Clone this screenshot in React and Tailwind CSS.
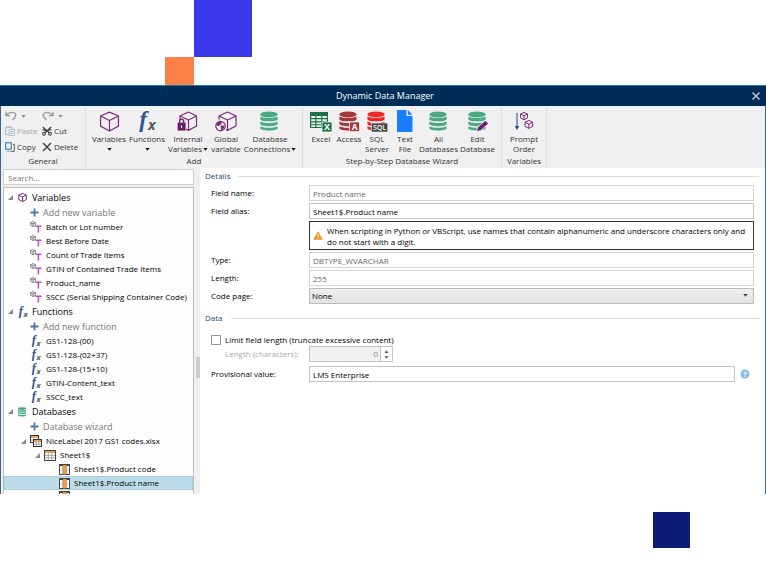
import { useState } from 'react';

/* ---------- Icons ---------- */

const CubeIcon = ({ className, strokeWidth = 1.4 }) => (
  <svg viewBox="0 0 20 20" className={className} fill="none" stroke="currentColor" strokeWidth={strokeWidth} strokeLinejoin="round">
    <path d="M10 1 L18.5 4.8 V14.4 L10 19 L1.5 14.4 V4.8 Z" />
    <path d="M1.5 4.8 L10 9 L18.5 4.8 M10 9 V19" />
  </svg>
);

const LockedCubeIcon = () => (
  <svg viewBox="0 0 22 21" className="h-[21px] w-[22px]" fill="none" stroke="#7b2d7b" strokeWidth="1.2" strokeLinejoin="round">
    <path d="M3 9 V5 L11.5 1 L19.5 5 V15 L11.5 19.4 L9 18.2" />
    <path d="M3 5 L11.5 9 L19.5 5 M11.5 9 V19" />
    <rect x="0.6" y="11.6" width="8" height="8" fill="#6d1f6d" stroke="none" />
    <path d="M2.6 12 V10.2 a2 2 0 0 1 4 0 V12" strokeWidth="1.5" />
    <path d="M4.6 14.4 V17" stroke="#fff" strokeWidth="1" />
  </svg>
);

const GlobalCubeIcon = () => (
  <svg viewBox="0 0 22 21" className="h-[21px] w-[22px]" fill="none" stroke="#7b2d7b" strokeWidth="1.2" strokeLinejoin="round">
    <path d="M4 8.5 V5 L12.5 1 L21 5 V15 L12.5 19.4 L11 18.6" />
    <path d="M4 5 L12.5 9 L21 5 M12.5 9 V19" />
    <circle cx="5.5" cy="15" r="4.7" fill="#f0f0f0" />
    <path d="M1.6 12.8 C3 10.6 5.8 10.4 6.8 11.6 C7.4 13 5.4 13 5 14.2 C4.6 15.4 3 15 1.6 14.6 Z" fill="#7b2d7b" stroke="none" />
    <path d="M5.8 15 C7.2 14.2 9.2 14.8 9.6 15.6 C9 17.6 7.6 19 6 19.2 C6.6 17.4 5 16.4 5.8 15 Z" fill="#7b2d7b" stroke="none" />
  </svg>
);

const DatabaseIcon = ({ className, children }) => (
  <svg viewBox="0 0 22 21" className={className} fill="currentColor">
    <ellipse cx="10" cy="3.4" rx="8.6" ry="3" />
    <path d="M1.4 5.2 C3 7.6 17 7.6 18.6 5.2 V8.4 C17 11 3 11 1.4 8.4 Z" />
    <path d="M1.4 10.2 C3 12.6 17 12.6 18.6 10.2 V13.2 C17 15.8 3 15.8 1.4 13.2 Z" />
    <path d="M1.4 15 C3 17.4 17 17.4 18.6 15 V17.6 C17 20.4 3 20.4 1.4 17.6 Z" />
    {children}
  </svg>
);

const ExcelIcon = () => (
  <svg viewBox="0 0 22 21" className="h-[21px] w-[22px]">
    <path d="M0 1 H18 V17 H0 Z" fill="#1e7145" />
    <path
      d="M1.2 5 H5.2 V7 H1.2 Z M6.4 5 H11.2 V7 H6.4 Z M12.4 5 H16.8 V7 H12.4 Z M1.2 8.2 H5.2 V10.2 H1.2 Z M6.4 8.2 H11.2 V10.2 H6.4 Z M12.4 8.2 H16.8 V10.2 H12.4 Z M1.2 11.4 H5.2 V13.2 H1.2 Z M6.4 11.4 H11.2 V13.2 H6.4 Z M1.2 14.2 H5.2 V16 H1.2 Z M6.4 14.2 H11.2 V16 H6.4 Z"
      fill="#f0f0f0"
    />
    <rect x="12" y="11" width="10" height="10" fill="#1e7145" stroke="#f0f0f0" strokeWidth="0.8" />
    <text x="17" y="19.2" textAnchor="middle" fontSize="9" fontWeight="700" fill="#fff">X</text>
  </svg>
);

const TextFileIcon = () => (
  <svg viewBox="0 0 16 22" className="h-[22px] w-4">
    <path d="M0 0 H9.5 V6 H15.5 V22 H0 Z" fill="#1a7dff" />
    <path d="M10.8 0 L15.5 4.8 H10.8 Z" fill="#1a7dff" />
  </svg>
);

const PromptIcon = () => (
  <svg viewBox="0 0 20 20" className="h-5 w-5" fill="none" strokeLinejoin="round">
    <path d="M3 2 V17" stroke="#2a5a94" strokeWidth="1.1" />
    <path d="M0.8 15 H5.2 L3 19 Z" fill="#1f4e8c" />
    <g stroke="#7b2d7b" strokeWidth="1">
      <path d="M10 1.4 L13.4 3 V7 L10 8.8 L6.6 7 V3 Z M6.6 3 L10 4.8 L13.4 3 M10 4.8 V8.8" />
      <path d="M14.8 9.4 L18.6 11.2 V15.4 L14.8 17.4 L11 15.4 V11.2 Z M11 11.2 L14.8 13.2 L18.6 11.2 M14.8 13.2 V17.4" />
    </g>
  </svg>
);

const FxIcon = ({ large }) => (
  <svg viewBox="0 0 20 20" className={large ? 'h-[22px] w-[22px] overflow-visible' : 'h-3 w-3 overflow-visible'} fontStyle="italic" fontWeight="700">
    <text x="3" y="15" fontSize="21" fontFamily="Liberation Serif, serif" fill="#2f5496">f</text>
    <text x="11" y="18" fontSize="13" fill="#555">x</text>
  </svg>
);

const VariableIcon = () => (
  <svg viewBox="0 0 12 12" className="h-3 w-3" fill="none">
    <path d="M3 0.6 L5.4 1.7 V4.3 L3 5.5 L0.6 4.3 V1.7 Z M0.6 1.7 L3 2.8 L5.4 1.7 M3 2.8 V5.5" stroke="#666" strokeWidth="0.8" />
    <path d="M5.4 5.2 H11.4 M8.4 5 V11.4" stroke="#b94fc0" strokeWidth="1.5" />
  </svg>
);

const PlusIcon = () => (
  <svg viewBox="0 0 10 10" className="h-[9px] w-[9px]">
    <path d="M5 0.5 V9.5 M0.5 5 H9.5" stroke="#4a7aa8" strokeWidth="2" />
  </svg>
);

const TableIcon = () => (
  <svg viewBox="0 0 12 11" className="h-[11px] w-3">
    <rect x="0.5" y="0.5" width="11" height="10" fill="#fff" stroke="#444" />
    <rect x="0" y="0" width="12" height="1.4" fill="#444" />
    <rect x="1" y="1.4" width="10" height="1.6" fill="#f0a030" />
    <path d="M4.2 3 V10 M7.8 3 V10 M1 5.4 H11 M1 7.8 H11" stroke="#8a8a8a" strokeWidth="0.7" />
  </svg>
);

const TablesIcon = () => (
  <svg viewBox="0 0 12 12" className="h-3 w-3">
    <rect x="0.5" y="0.5" width="8" height="7" fill="#fff" stroke="#333" />
    <rect x="0" y="0" width="9" height="1.4" fill="#333" />
    <rect x="1" y="1.4" width="7" height="1.4" fill="#f0a030" />
    <path d="M3.5 3 V7 M1 5 H8" stroke="#777" strokeWidth="0.6" />
    <rect x="3.5" y="4.5" width="8" height="7" fill="#fff" stroke="#333" />
    <rect x="3" y="4" width="9" height="1.4" fill="#333" />
    <rect x="4" y="5.4" width="7" height="1.6" fill="#f0a030" />
    <path d="M6.2 7 V11 M8.8 7 V11 M4 9 H11" stroke="#777" strokeWidth="0.6" />
  </svg>
);

const ColumnIcon = () => (
  <svg viewBox="0 0 11 11" className="h-[11px] w-[11px]">
    <rect x="0.5" y="0.5" width="10" height="10" fill="#fff" stroke="#444" />
    <rect x="0" y="0" width="11" height="2" fill="#444" />
    <rect x="4" y="1" width="3.4" height="9.4" fill="#f0a030" />
    <path d="M3.6 2 V10 M7.6 2 V10" stroke="#777" strokeWidth="0.6" />
    <path d="M1 6 H10" stroke="#aaa" strokeWidth="0.5" />
  </svg>
);

const Caret = ({ className }) => (
  <svg viewBox="0 0 5 3" className={`h-[3px] w-[5px] ${className || ''}`} fill="currentColor">
    <path d="M0.4 0 H4.6 L2.5 2.8 Z" />
  </svg>
);

const UndoIcon = ({ flip }) => (
  <svg viewBox="0 0 12 10" className={flip ? 'h-[10px] w-3 -scale-x-100' : 'h-[10px] w-3'} fill="none" stroke="#9a9a9a" strokeWidth="1.4">
    <path d="M1 0.8 V4.6 H5" />
    <path d="M1.4 4.2 C4 0.8 9.6 0.4 10.6 3.4 C11.2 5.6 9.4 7.4 7.4 9" />
  </svg>
);

const PasteIcon = () => (
  <svg viewBox="0 0 10 10" className="h-[10px] w-[10px]" fill="none" strokeWidth="0.9">
    <path d="M3.6 8.6 H0.6 V1.4 H7.4 V3 M2.4 1.4 V0.5 H5.4 V1.4" stroke="#b5b5b5" />
    <path d="M4 3.6 H9.4 V9.5 H4 Z M5.4 5.6 H8 M5.4 7.4 H8" stroke="#9dbbd2" />
  </svg>
);

const CopyIcon = () => (
  <svg viewBox="0 0 10 10" className="h-[10px] w-[10px]" fill="none">
    <path d="M5.5 9.4 H9.3 V2.4 H7.8" stroke="#555" strokeWidth="0.9" />
    <path d="M0.7 0.7 H6.3 V7.3 H0.7 Z" stroke="#2f78b0" strokeWidth="1.1" />
    <path d="M2.4 9.2 H4.4" stroke="#2f78b0" strokeWidth="0.9" />
  </svg>
);

const CutIcon = () => (
  <svg viewBox="0 0 10 10" className="h-[10px] w-[10px]" fill="none" stroke="#444">
    <path d="M0.8 1 L7.4 7 M9.2 1 L2.6 7 M0.6 3.6 L4 4.4 M9.4 3.6 L6 4.4" strokeWidth="1.3" />
    <circle cx="2" cy="7.8" r="1.4" strokeWidth="1.1" />
    <circle cx="8" cy="7.8" r="1.4" strokeWidth="1.1" />
  </svg>
);

const DeleteIcon = () => (
  <svg viewBox="0 0 10 10" className="h-[10px] w-[10px]" stroke="#444" strokeWidth="1.5">
    <path d="M1 1 L9 9 M9 1 L1 9" />
  </svg>
);

/* ---------- Ribbon ---------- */

const RibbonButton = ({ icon, lines, caret, width }) => (
  <button type="button" className={`flex flex-col items-center ${width}`}>
    <span className="flex h-[26px] items-center justify-center">{icon}</span>
    {lines.map((line, i) => (
      <span key={line} className="flex h-[10px] items-center gap-px whitespace-nowrap leading-[10px]">
        {line}
        {caret && i === 1 && <Caret className="text-black" />}
      </span>
    ))}
    {caret && lines.length === 1 && (
      <span className="flex h-[10px] items-center">
        <Caret className="text-black" />
      </span>
    )}
  </button>
);

const RibbonGroup = ({ title, children }) => (
  <div className="flex flex-col border-r border-[#dcdcdc] px-1">
    <div className="flex flex-1">{children}</div>
    <div className="h-3 text-center leading-3">{title}</div>
  </div>
);

const SmallButton = ({ icon, label, disabled }) => (
  <button type="button" disabled={disabled} className={`flex h-4 items-center gap-0.5 ${disabled ? 'text-[#a8a8a8]' : ''}`}>
    {icon}
    {label}
  </button>
);

const Ribbon = () => (
  <div className="flex bg-[#f0f0f0] pt-0.5 pb-px text-[8px] text-[#333]">
    <RibbonGroup title="General">
      <div className="grid w-[76px] grid-cols-[37px_auto] content-start pt-px">
        <button type="button" aria-label="Undo" className="flex h-[14px] items-center gap-1 text-[#8a8a8a]">
          <UndoIcon />
          <Caret />
        </button>
        <button type="button" aria-label="Redo" className="flex h-[14px] items-center gap-1 text-[#8a8a8a]">
          <UndoIcon flip />
          <Caret />
        </button>
        <SmallButton icon={<PasteIcon />} label="Paste" disabled />
        <SmallButton icon={<CutIcon />} label="Cut" />
        <SmallButton icon={<CopyIcon />} label="Copy" />
        <SmallButton icon={<DeleteIcon />} label="Delete" />
      </div>
    </RibbonGroup>
    <RibbonGroup title="Add">
      <RibbonButton width="w-[38px]" icon={<CubeIcon className="h-[21px] w-[21px] text-[#7b2d7b]" strokeWidth={1.2} />} lines={['Variables']} caret />
      <RibbonButton width="w-[38px]" icon={<FxIcon large />} lines={['Functions']} caret />
      <RibbonButton width="w-[44px]" icon={<LockedCubeIcon />} lines={['Internal', 'Variables']} caret />
      <RibbonButton width="w-8" icon={<GlobalCubeIcon />} lines={['Global', 'variable']} />
      <RibbonButton width="w-14" icon={<DatabaseIcon className="h-[21px] w-[22px] text-[#4ba984]" />} lines={['Database', 'Connections']} caret />
    </RibbonGroup>
    <RibbonGroup title="Step-by-Step Database Wizard">
      <RibbonButton width="w-7" icon={<ExcelIcon />} lines={['Excel']} />
      <RibbonButton
        width="w-7"
        icon={
          <DatabaseIcon className="h-[21px] w-[22px] text-[#a4373a]">
            <rect x="11.6" y="11" width="10" height="9.6" stroke="#f0f0f0" strokeWidth="0.8" />
            <text x="16.6" y="19" textAnchor="middle" fontSize="8.5" fontWeight="700" fill="#fff">A</text>
          </DatabaseIcon>
        }
        lines={['Access']}
      />
      <RibbonButton
        width="w-7"
        icon={
          <DatabaseIcon className="h-[21px] w-[22px] text-[#ee2a24]">
            <rect x="5.4" y="12" width="16.4" height="9" fill="#444" stroke="#f0f0f0" strokeWidth="0.6" />
            <text x="13.6" y="19" textAnchor="middle" fontSize="7" fontWeight="600" fill="#fff">SQL</text>
          </DatabaseIcon>
        }
        lines={['SQL', 'Server']}
      />
      <RibbonButton width="w-7" icon={<TextFileIcon />} lines={['Text', 'File']} />
      <RibbonButton width="w-[39px]" icon={<DatabaseIcon className="h-[21px] w-[22px] text-[#4ba984]" />} lines={['All', 'Databases']} />
      <RibbonButton
        width="w-[39px]"
        icon={
          <DatabaseIcon className="h-[21px] w-[22px] text-[#4ba984]">
            <path d="M9.4 20.8 L10.6 16.4 L18.2 9.4 L21.6 12.6 L13.8 19.6 Z" fill="#6d2077" stroke="#f0f0f0" strokeWidth="0.9" />
          </DatabaseIcon>
        }
        lines={['Edit', 'Database']}
      />
    </RibbonGroup>
    <RibbonGroup title="Variables">
      <RibbonButton width="w-9" icon={<PromptIcon />} lines={['Prompt', 'Order']} />
    </RibbonGroup>
  </div>
);

/* ---------- Tree ---------- */

const variables = [
  'Batch or Lot number',
  'Best Before Date',
  'Count of Trade Items',
  'GTIN of Contained Trade Items',
  'Product_name',
  'SSCC (Serial Shipping Container Code)',
];

const functions = ['GS1-128-(00)', 'GS1-128-(02+37)', 'GS1-128-(15+10)', 'GTIN-Content_text', 'SSCC_text'];

const columns = ['Sheet1$.Product code', 'Sheet1$.Product name'];

const Expander = () => (
  <svg viewBox="0 0 5 5" className="h-[5px] w-[5px] shrink-0" fill="#888">
    <path d="M5 0 V5 H0 Z" />
  </svg>
);

const TreeHeader = ({ icon, label }) => (
  <div className="flex h-[15px] items-center pl-1 text-[9px]">
    <Expander />
    <span className="flex w-[19px] justify-center">{icon}</span>
    {label}
  </div>
);

const AddRow = ({ label }) => (
  <button type="button" className="flex h-[15px] items-center gap-1 pl-[26px] text-[9px] text-[#777]">
    <PlusIcon />
    {label}
  </button>
);

const Leaf = ({ icon, label }) => (
  <div className="flex h-[14px] items-center gap-1 pl-[26px]">
    {icon}
    {label}
  </div>
);

const Tree = () => {
  const [selected, setSelected] = useState('Sheet1$.Product name');

  return (
    <div className="min-h-0 flex-1 overflow-hidden border border-b-0 border-[#bdbdbd] bg-[#fdfdfd] pt-0.5 text-[8px] whitespace-nowrap text-black">
      <TreeHeader icon={<CubeIcon className="h-[9px] w-[9px] text-[#7b2d7b]" strokeWidth={2.2} />} label="Variables" />
      <AddRow label="Add new variable" />
      {variables.map((name) => (
        <Leaf key={name} icon={<VariableIcon />} label={name} />
      ))}

      <TreeHeader icon={<FxIcon />} label="Functions" />
      <AddRow label="Add new function" />
      {functions.map((name) => (
        <Leaf key={name} icon={<FxIcon />} label={name} />
      ))}

      <TreeHeader icon={<DatabaseIcon className="h-[10px] w-[11px] text-[#4ba984]" />} label="Databases" />
      <AddRow label="Database wizard" />
      <div className="flex h-[14px] items-center gap-1 pl-[17px]">
        <Expander />
        <TablesIcon />
        NiceLabel 2017 GS1 codes.xlsx
      </div>
      <div className="flex h-[14px] items-center gap-1 pl-[31px]">
        <Expander />
        <TableIcon />
        Sheet1$
      </div>
      {columns.map((name) => (
        <button
          key={name}
          type="button"
          onClick={() => setSelected(name)}
          className={`flex h-[14px] w-full items-center gap-1 pl-[55px] ${
            name === selected ? 'bg-[#bddcea] outline outline-[#a8cde0] -outline-offset-1' : ''
          }`}
        >
          <ColumnIcon />
          {name}
        </button>
      ))}
      <div className="pt-px pl-[55px]">
        <ColumnIcon />
      </div>
    </div>
  );
};

/* ---------- Details form ---------- */

const SectionTitle = ({ children }) => (
  <div className="flex h-3 items-center gap-2 text-[#24476f]">
    <h2>{children}</h2>
    <div className="h-px flex-1 bg-[#dcdcdc]" />
  </div>
);

const inputClass = 'h-4 w-full min-w-0 border bg-white px-[3px] outline-none';

const Field = ({ id, label, value, readOnly }) => (
  <>
    <label htmlFor={id}>{label}</label>
    <input
      id={id}
      defaultValue={value}
      readOnly={readOnly}
      className={`${inputClass} ${readOnly ? 'border-[#d4d4d4] text-[#666]' : 'border-[#c4c4c4]'}`}
    />
  </>
);

const Details = () => (
  <main className="min-w-0 flex-1 bg-white pt-0.5 pr-[6px] pl-[5px] text-[8px] text-black">
    <SectionTitle>Details</SectionTitle>
    <div className="mt-[3px] grid grid-cols-[98px_1fr] items-center gap-y-0.5 pr-[5px] pl-1.5">
      <Field id="field-name" label="Field name:" value="Product name" readOnly />
      <Field id="field-alias" label="Field alias:" value="Sheet1$.Product name" />
      <div className="col-start-2 flex h-[29px] items-center gap-1 border border-[#333] px-[3px] leading-[11px]">
        <svg viewBox="0 0 10 9" className="h-[9px] w-[10px] shrink-0">
          <path d="M5 0.3 L9.8 8.7 H0.2 Z" fill="#f39322" />
          <path d="M5 3 V6 M5 6.8 V7.8" stroke="#fff" strokeWidth="1" />
        </svg>
        <p>
          When scripting in Python or VBScript, use names that contain alphanumeric and underscore characters only and
          do not start with a digit.
        </p>
      </div>
      <Field id="type" label="Type:" value="DBTYPE_WVARCHAR" readOnly />
      <Field id="length" label="Length:" value="255" readOnly />
      <label htmlFor="code-page">Code page:</label>
      <div className="relative">
        <select
          id="code-page"
          className="block h-4 w-full appearance-none border border-[#bcbcbc] bg-linear-to-b from-[#efefef] to-[#e3e3e3] px-0.5 outline-none"
        >
          <option>None</option>
        </select>
        <Caret className="pointer-events-none absolute top-1.5 right-1.5 text-[#333]" />
      </div>
    </div>

    <div className="mt-2">
      <SectionTitle>Data</SectionTitle>
    </div>
    <div className="mt-2.5 pr-[5px] pl-1.5">
      <label className="flex h-3 items-center gap-1">
        <input type="checkbox" className="h-[10px] w-[10px] appearance-none border border-[#999] bg-white" />
        Limit field length (truncate excessive content)
      </label>
      <div className="grid grid-cols-[98px_1fr] items-center">
        <label htmlFor="max-length" className="pl-[14px] text-[#a8a8a8]">
          Length (characters):
        </label>
        <div className="flex h-4 w-[84px] border border-[#c4c4c4] bg-[#f0f0f0] text-[#8a8a8a]">
          <input id="max-length" defaultValue="0" disabled className="w-0 flex-1 pr-0.5 text-right outline-none" />
          <div className="flex w-3 flex-col items-center justify-center gap-[3px] border-l border-[#c4c4c4] bg-white text-[#666]">
            <Caret className="rotate-180" />
            <Caret />
          </div>
        </div>
      </div>
      <div className="mt-1 flex items-center gap-[5px] pr-1">
        <div className="grid flex-1 grid-cols-[98px_1fr] items-center">
          <Field id="provisional" label="Provisional value:" value="LMS Enterprise" />
        </div>
        <svg viewBox="0 0 10 10" className="h-[10px] w-[10px]">
          <circle cx="5" cy="5" r="4.5" fill="#85bcd9" />
          <text x="5" y="7.8" textAnchor="middle" fontSize="7" fontWeight="700" fill="#fff">?</text>
        </svg>
      </div>
    </div>
  </main>
);

const App = () => {
  return (
    <div className="flex h-screen flex-col overflow-hidden bg-white font-['Open_Sans',sans-serif]">
      <div className="flex h-[85px] shrink-0 pl-[165px]">
        <div className="h-7 w-[29px] self-end bg-[#fb8149]" />
        <div className="h-[57px] w-[58px] bg-[#3c39ec]" />
      </div>

      <div className="flex min-h-0 flex-1 flex-col">
        <header className="flex h-[21px] shrink-0 items-center border-t border-[#1b7db0] bg-[#002d57] px-1.5 text-white">
          <h1 className="flex-1 pl-3 text-center text-[9px]">Dynamic Data Manager</h1>
          <button type="button" aria-label="Close">
            <svg viewBox="0 0 8 8" className="h-2 w-2" stroke="#b9c6d3" strokeWidth="1.5">
              <path d="M0.5 0.5 L7.5 7.5 M7.5 0.5 L0.5 7.5" />
            </svg>
          </button>
        </header>

        <div className="flex min-h-0 flex-1 flex-col border-x border-[#3f6390] bg-[#f0f0f0]">
          <Ribbon />
          <div className="flex min-h-0 flex-1">
            <aside className="flex w-[193px] shrink-0 flex-col pt-px pl-0.5">
              <input
                aria-label="Search"
                placeholder="Search..."
                className="mb-0.5 h-4 w-full shrink-0 border border-[#cfcfcf] bg-white px-1 text-[8px] outline-none placeholder:text-[#777]"
              />
              <Tree />
            </aside>
            <div className="flex w-[6px] shrink-0 items-center justify-end">
              <div className="mt-[72px] h-[21px] w-1 bg-[#cdcdcd]" />
            </div>
            <Details />
          </div>
        </div>
      </div>

      <div className="flex h-[76px] shrink-0 items-start justify-end pt-[18px] pr-[76px]">
        <div className="h-9 w-[37px] bg-[#0e1c78]" />
      </div>
    </div>
  );
};

export default App;
